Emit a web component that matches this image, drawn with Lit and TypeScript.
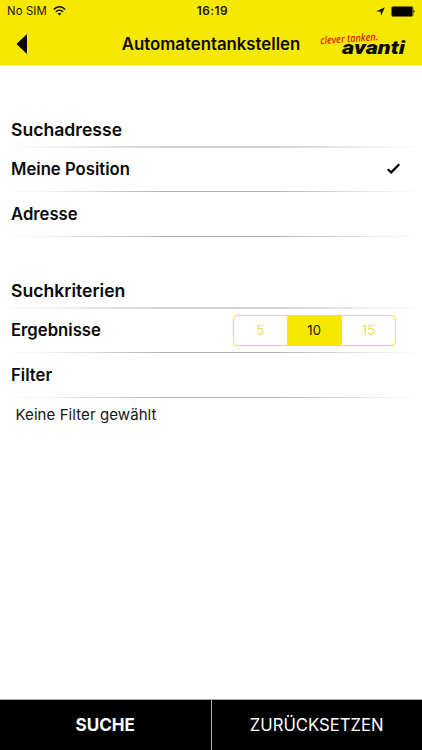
import { LitElement, html, css } from "lit";
import { customElement, property, state } from "lit/decorators.js";
import { classMap } from "lit/directives/class-map.js";

@customElement("status-bar")
class StatusBar extends LitElement {
  static styles = css`
    :host {
      display: grid;
      grid-template-columns: 1fr auto 1fr;
      align-items: center;
      height: 22px;
      padding: 0 7px;
      box-sizing: border-box;
      font-size: 11.3px;
      color: #151500;
    }
    .left, .right { display: flex; align-items: center; }
    .left { gap: 6px; letter-spacing: 0.15px; }
    .right { justify-content: flex-end; gap: 6px; }
    .time { font-weight: 600; font-size: 11.8px; letter-spacing: 0.5px; padding-left: 3px; }
    svg { display: block; }
  `;
  render() {
    return html`
      <div class="left">
        <span>No SIM</span>
        <svg width="13" height="10" viewBox="0 0 13 10" fill="none" stroke="#151500" stroke-width="1.5">
          <path d="M.8 3.6C4-.1 9-.1 12.2 3.6" />
          <path d="M2.9 5.8C5 3.6 8 3.6 10.1 5.8" />
          <path d="M6.5 9.5L4.5 7.5C5.6 6.4 7.4 6.4 8.5 7.5Z" fill="#151500" stroke="none" />
        </svg>
      </div>
      <span class="time">16:19</span>
      <div class="right">
        <svg width="9" height="9" viewBox="0 0 9 9"><path d="M8.8.3L5.2 8.8L4.6 4.7L.2 4.2Z" fill="#151500" /></svg>
        <svg width="24" height="11" viewBox="0 0 24 11">
          <rect x=".5" y=".5" width="21.5" height="10" rx="1.4" fill="none" stroke="#77720a" />
          <rect x="1" y="1" width="20.5" height="9" rx=".8" fill="#050500" />
          <path d="M22.6 3.8Q24.6 5.5 22.6 7.2Z" fill="#151500" />
        </svg>
      </div>
    `;
  }
}

@customElement("nav-bar")
class NavBar extends LitElement {
  static styles = css`
    :host {
      display: grid;
      grid-template-columns: 106px 1fr 106px;
      align-items: center;
      height: 43px;
    }
    .back { padding-left: 16px; }
    .title {
      text-align: center;
      font-size: 16.8px;
      font-weight: 600;
      white-space: nowrap;
      color: #0c0c00;
    }
    svg { display: block; }
    .script { font-family: "Open Sans", sans-serif; font-size: 10.5px; font-style: italic; font-weight: 600; }
    .brand { font-family: Roboto, sans-serif; font-size: 17.5px; font-style: italic; font-weight: 900; }
  `;
  render() {
    return html`
      <div class="back">
        <svg width="12" height="22" viewBox="0 0 12 22"><path d="M11 1V21L.5 11Z" fill="#050500" /></svg>
      </div>
      <div class="title">Automatentankstellen</div>
      <svg width="106" height="32" viewBox="0 0 106 32">
        <text class="script" transform="translate(4.5 16.2) rotate(-4)" textLength="58" lengthAdjust="spacingAndGlyphs" fill="#e3200b">clever tanken.</text>
        <text class="brand" x="26" y="26" textLength="63" lengthAdjust="spacingAndGlyphs" fill="#0c0c00">avanti</text>
      </svg>
    `;
  }
}

@customElement("result-picker")
class ResultPicker extends LitElement {
  @property({ type: Array }) options: number[] = [];
  @state() private selected = 10;

  static styles = css`
    :host {
      display: grid;
      grid-template-columns: 52.5px 55.5px 53px;
      height: 29px;
      border: 1px solid #f2e71c;
      border-radius: 4px;
      overflow: hidden;
    }
    .option {
      display: flex;
      align-items: center;
      justify-content: center;
      padding-bottom: 1px;
      font-size: 13px;
      letter-spacing: 0.2px;
      font-weight: 400;
      color: #ece24a;
    }
    .active { background: #f6e800; color: #141400; }
  `;
  render() {
    return this.options.map(
      (n) => html`<div class=${classMap({ option: true, active: n === this.selected })} @click=${() => (this.selected = n)}>${n}</div>`
    );
  }
}

@customElement("app-root")
class AppRoot extends LitElement {
  static styles = css`
    :host {
      display: flex;
      flex-direction: column;
      height: 750px;
      background: #fff;
      color: #0a0a0a;
      font-family: Inter, "Liberation Sans", sans-serif;
      overflow: hidden;
    }
    header { background: #f6e800; border-bottom: 1px solid #fbf59c; }
    main { flex: 1; padding-top: 47px; }
    section { margin-bottom: 37px; }
    .heading, .row {
      display: flex;
      align-items: center;
      justify-content: space-between;
      box-sizing: border-box;
      padding: 0 26px 0 11px;
      font-size: 16.7px;
      font-weight: 600;
    }
    .heading { height: 33px; padding-bottom: 1px; font-size: 17.6px; }
    .row { height: 44px; }
    .row.short { height: 43px; padding-bottom: 1px; }
    .line {
      height: 1px;
      background: linear-gradient(90deg, #fff, #f0f0f0 12%, #b0b0b0 40%, #b0b0b0 64%, #e8e8e8 88%, #fff);
    }
    .soft {
      height: 2px;
      background: linear-gradient(90deg, #fff, #f4f4f4 12%, #d0d0d0 40%, #d0d0d0 64%, #f0f0f0 88%, #fff);
    }
    .check { display: block; margin-right: -5px; }
    .summary { padding: 8px 15.5px 0; font-size: 15px; line-height: 18px; letter-spacing: 0.08px; color: #161616; }
    footer {
      display: grid;
      grid-template-columns: 210.5px 1fr;
      column-gap: 1px;
      height: 51px;
      border-top: 1px solid #aaa;
      box-sizing: border-box;
      background: #aaa;
    }
    .action {
      display: flex;
      align-items: center;
      justify-content: center;
      background: #000;
      color: #fff;
      font-size: 16.7px;
    }
    .primary { font-weight: 700; font-size: 17.1px; padding-bottom: 1px; }
  `;
  render() {
    return html`
      <header>
        <status-bar></status-bar>
        <nav-bar></nav-bar>
      </header>
      <main>
        <section>
          <div class="heading"><span>Suchadresse</span></div>
          <div class="line soft"></div>
          <div class="row short">
            <span>Meine Position</span>
            <svg class="check" width="15" height="12" viewBox="0 0 15 12" fill="none" stroke="#000" stroke-width="2.2">
              <path d="M1.7 6.2L5.2 9.4L13.3 1.3" />
            </svg>
          </div>
          <div class="line"></div>
          <div class="row"><span>Adresse</span></div>
          <div class="line"></div>
        </section>
        <section>
          <div class="heading"><span>Suchkriterien</span></div>
          <div class="line soft"></div>
          <div class="row short">
            <span>Ergebnisse</span>
            <result-picker .options=${[5, 10, 15]}></result-picker>
          </div>
          <div class="line"></div>
          <div class="row"><span>Filter</span></div>
          <div class="line"></div>
          <div class="summary">Keine Filter gewählt</div>
        </section>
      </main>
      <footer>
        <div class="action primary">SUCHE</div>
        <div class="action">ZURÜCKSETZEN</div>
      </footer>
    `;
  }
}
